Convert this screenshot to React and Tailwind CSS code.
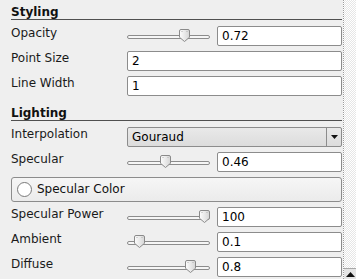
import React from "react";

const FONT = { fontFamily: '"DejaVu Sans", "Liberation Sans", sans-serif' };

function Handle({ pos }) {
  return (
    <svg
      className="absolute top-[3px]"
      style={{ left: pos }}
      width="11"
      height="13"
      viewBox="0 0 11 13"
    >
      <defs>
        <linearGradient id="hg" x1="0" y1="0" x2="1" y2="0">
          <stop offset="0" stopColor="#fdfdfd" />
          <stop offset="1" stopColor="#d6d6d6" />
        </linearGradient>
      </defs>
      <path
        d="M2 0.5 H9 Q10.5 0.5 10.5 2 V8.3 L5.5 12.5 L0.5 8.3 V2 Q0.5 0.5 2 0.5 Z"
        fill="url(#hg)"
        stroke="#8a8a8a"
        strokeWidth="1"
      />
      <rect x="2.5" y="2" width="1" height="1" fill="#b0b0b0" />
      <rect x="7.5" y="2" width="1" height="1" fill="#b0b0b0" />
    </svg>
  );
}

function Slider({ value }) {
  return (
    <div className="relative w-[83px] h-[20px] shrink-0">
      <div className="absolute left-0 right-0 top-[9px] h-[4px] rounded-[2px] border border-[#8c8c8c] bg-[#f6f6f6]" />
      <Handle pos={Math.round(value * 72)} />
    </div>
  );
}

function Input({ value, className = "" }) {
  return (
    <div
      className={`h-[20px] rounded-[2px] border border-[#8c8c8c] bg-white px-[4px] flex items-center text-[12px] leading-[14px] text-black ${className}`}
    >
      {value}
    </div>
  );
}

function Label({ children }) {
  return (
    <div className="w-[116px] shrink-0 text-[12px] leading-[14px] text-[#1a1a1a] pt-0">
      {children}
    </div>
  );
}

function Row({ label, children }) {
  return (
    <div className="flex h-[20px]">
      <Label>{label}</Label>
      <div className="flex-1 flex">{children}</div>
    </div>
  );
}

function SliderRow({ label, value, text }) {
  return (
    <Row label={label}>
      <Slider value={value} />
      <Input value={text} className="ml-[7px] flex-1" />
    </Row>
  );
}

function Header({ children, className = "" }) {
  return (
    <div
      className={`text-[12px] leading-[14px] font-bold text-[#111] border-b border-[#505050] ${className}`}
    >
      {children}
    </div>
  );
}

export default function App() {
  return (
    <div
      className="w-[356px] h-[279px] flex bg-[#efefef] overflow-hidden"
      style={FONT}
    >
      <div className="w-[343px] shrink-0 pl-[11px] pr-[1px] flex flex-col">
        <Header className="mt-[5px]">Styling</Header>
        <div className="mt-[6px] flex flex-col gap-[5px]">
          <SliderRow label="Opacity" value={0.72} text="0.72" />
          <Row label="Point Size">
            <Input value="2" className="flex-1" />
          </Row>
          <Row label="Line Width">
            <Input value="1" className="flex-1" />
          </Row>
        </div>
        <Header className="mt-[10px]">Lighting</Header>
        <div className="mt-[6px] flex flex-col gap-[5px]">
          <Row label="Interpolation">
            <div className="flex-1 h-[20px] rounded-[2px] border border-[#8c8c8c] bg-[linear-gradient(#e9e9e9,#dcdcdc)] flex">
              <div className="flex-1 flex items-center pl-[4px] text-[12px] leading-[14px] text-black">
                Gouraud
              </div>
              <div className="w-[15px] border-l border-[#8c8c8c] flex items-center justify-center">
                <svg width="7" height="4" viewBox="0 0 7 4">
                  <polygon points="0,0 7,0 3.5,4" fill="#111" />
                </svg>
              </div>
            </div>
          </Row>
          <SliderRow label="Specular" value={0.46} text="0.46" />
          <div className="h-[25px] rounded-[3px] border border-[#8c8c8c] bg-[linear-gradient(#f6f6f6,#ebebeb)] flex items-center pl-[5px]">
            <div className="w-[15px] h-[15px] rounded-full border border-[#7a7a7a] bg-white shrink-0" />
            <div className="ml-[5px] text-[12px] leading-[14px] text-[#111] pb-[2px]">
              Specular Color
            </div>
          </div>
          <SliderRow label="Specular Power" value={1} text="100" />
          <SliderRow label="Ambient" value={0.1} text="0.1" />
          <SliderRow label="Diffuse" value={0.8} text="0.8" />
        </div>
      </div>
      <div className="w-[13px] shrink-0 border-l border-dotted border-[#9a9a9a] bg-[repeating-conic-gradient(#e6e6e6_0_25%,#ffffff_0_50%)] bg-[length:2px_2px] flex flex-col justify-end">
        <div className="h-[11px] bg-[#e4e4e4] border-t border-[#a8a8a8] flex items-start justify-center pt-[3px]">
          <svg width="9" height="5" viewBox="0 0 9 5">
            <polygon points="0,5 9,5 4.5,0" fill="#111" />
          </svg>
        </div>
      </div>
    </div>
  );
}
